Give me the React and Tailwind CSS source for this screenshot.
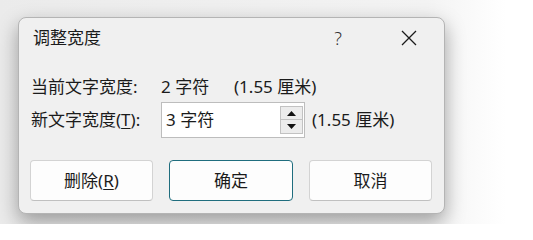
import React from "react";

const font = { fontFamily: '"Noto Sans", "Noto Sans CJK SC", sans-serif' };

function Spinner() {
  return (
    <div className="absolute right-[1px] top-[3px] flex w-[23px] flex-col">
      <div className="flex h-[14px] items-center justify-center border border-[#c2c2c2] bg-[#ececec]">
        <svg width="9" height="5" viewBox="0 0 9 5">
          <path d="M0 5 L4.5 0 L9 5 Z" fill="#111" />
        </svg>
      </div>
      <div className="-mt-px flex h-[15px] items-center justify-center border border-[#c2c2c2] bg-[#ececec]">
        <svg width="9" height="5" viewBox="0 0 9 5">
          <path d="M0 0 L4.5 5 L9 0 Z" fill="#111" />
        </svg>
      </div>
    </div>
  );
}

function DlgButton({ children, primary }) {
  return (
    <button
      className={
        primary
          ? "flex h-[41px] w-[124px] items-center justify-center rounded-[4px] border border-[#1f6d7e] bg-[#fdfdfd] text-[17px] text-[#1b1b1b]"
          : "flex h-[41px] w-[123px] items-center justify-center rounded-[4px] border border-[#d3d3d3] border-b-[#c0c0c0] bg-[#fdfdfd] text-[17px] text-[#1b1b1b]"
      }
    >
      {children}
    </button>
  );
}

export default function App() {
  return (
    <div
      className="h-[224px] w-[533px] overflow-hidden bg-[linear-gradient(90deg,#ebebeb_0%,#f3f3f3_80%,#ffffff_95%)] pl-[18px] pt-[17px]"
      style={font}
    >
      <div className="flex h-[197px] w-[427px] flex-col rounded-[8px] border border-[#b4b4b4] bg-[#f0f0f0] text-[#1b1b1b] shadow-[0_8px_20px_rgba(0,0,0,0.35)]">
        {/* title bar */}
        <div className="flex h-[40px] items-center pl-[14px]">
          <span className="text-[17px]">调整宽度</span>
          <span className="ml-auto mr-[59px] text-[18px] font-light text-[#333]">?</span>
          <svg width="16" height="16" viewBox="0 0 16 16" className="mr-[27px]">
            <path d="M1 1 L15 15 M15 1 L1 15" stroke="#1b1b1b" strokeWidth="1.3" />
          </svg>
        </div>

        {/* current width */}
        <div className="mt-[15px] flex h-[28px] items-center pl-[12px] text-[17px]">
          <span className="w-[130px]">当前文字宽度:</span>
          <span className="w-[73px]">2 字符</span>
          <span>(1.55 厘米)</span>
        </div>

        {/* new width */}
        <div className="mt-[1px] flex h-[36px] items-center pl-[12px] text-[17px]">
          <span className="w-[130px]">
            新文字宽度(<span className="underline underline-offset-2">T</span>):
          </span>
          <div className="relative flex h-[36px] w-[144px] items-center border border-[#bdbdbd] bg-white pl-[4px]">
            <span>3 字符</span>
            <Spinner />
          </div>
          <span className="ml-[7px]">(1.55 厘米)</span>
        </div>

        {/* buttons */}
        <div className="mt-[22px] flex gap-[16px] pl-[11px]">
          <DlgButton>
            删除(<span className="underline underline-offset-2">R</span>)
          </DlgButton>
          <DlgButton primary>确定</DlgButton>
          <DlgButton>取消</DlgButton>
        </div>
      </div>
    </div>
  );
}
